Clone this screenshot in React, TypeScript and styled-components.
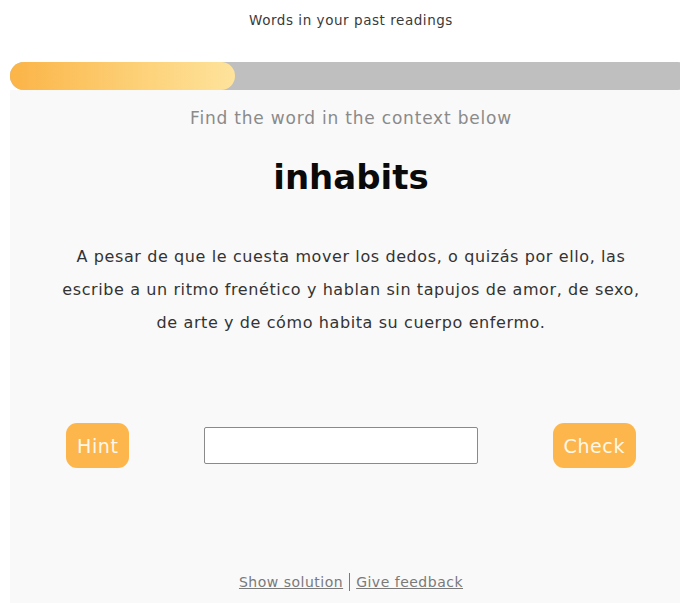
import React, {useState} from 'react';
import styled, {createGlobalStyle} from "styled-components";

const GlobalStyle = createGlobalStyle`
  html, body {
    margin: 0;
    padding: 0;
    background: #ffffff;
    overflow: hidden;
  }
  body {
    font-family: "DejaVu Sans", "Noto Sans", sans-serif;
  }
`

// the exercise card is a little wider than the window; its right edge is cut off
const Page = styled.div`
  width: 702px;
  height: 603px;
  display: flex;
  flex-direction: column;
`

const Title = styled.div`
  height: 62px;
  padding-top: 12px;
  box-sizing: border-box;
  text-align: center;
  font-size: 13.5px;
  letter-spacing: 0.55px;
  color: #3a3a3a;
`

const Track = styled.div`
  margin: 0 10px;
  height: 28px;
  background: #bfbfbf;
  border-radius: 14px;
  display: flex;
`

const Fill = styled.div<{ $progress: number }>`
  width: ${p => p.$progress}px;
  height: 100%;
  border-radius: 14px;
  background: linear-gradient(90deg, #fbb447 0%, #fdd27a 60%, #fee39c 100%);
`

const Panel = styled.div`
  flex: 1;
  margin: 0 10px;
  background: #f9f9f9;
  display: flex;
  flex-direction: column;
  align-items: center;
  padding-top: 17px;
`

const Prompt = styled.div`
  font-size: 17px;
  letter-spacing: 0.8px;
  color: #8a8a8a;
  line-height: 22px;
`

const Word = styled.h1`
  margin: 26px 0 0;
  font-size: 34px;
  font-weight: 700;
  color: #0a0a0a;
  line-height: 44px;
`

const Context = styled.p`
  margin: 41px 0 0;
  width: 592px;
  text-align: center;
  font-size: 16px;
  letter-spacing: 0.6px;
  line-height: 33px;
  color: #333333;
`

const Controls = styled.div`
  margin-top: 84px;
  width: 100%;
  display: flex;
  align-items: center;
  justify-content: space-between;
  padding: 0 56px;
  box-sizing: border-box;
`

const ActionButton = styled.button`
  height: 45px;
  padding: 0 11px;
  border: none;
  border-radius: 11px;
  background: #fdb64c;
  color: #fff8ea;
  font-family: inherit;
  font-size: 19px;
  letter-spacing: 0.6px;
  cursor: pointer;
`

const Answer = styled.input`
  width: 274px;
  height: 37px;
  box-sizing: border-box;
  border: 1px solid #8a8a8a;
  border-radius: 2px;
  background: #ffffff;
  font-family: inherit;
  font-size: 16px;
  padding: 0 8px;
  outline: none;
`

const Footer = styled.div`
  margin-top: auto;
  margin-bottom: 12px;
  font-size: 14px;
  letter-spacing: 0.5px;
  color: #7a7a7a;
  display: flex;
  gap: 6px;
  align-items: center;
`

const FooterLink = styled.a`
  color: #7a7a7a;
  text-decoration: underline;
  cursor: pointer;
`

const Divider = styled.span`
  width: 1px;
  height: 18px;
  background: #7a7a7a;
`

export default function App() {
    const [answer, setAnswer] = useState('')
    return (
        <Page>
            <GlobalStyle/>
            <Title>Words in your past readings</Title>
            <Track>
                <Fill $progress={225}/>
            </Track>
            <Panel>
                <Prompt>Find the word in the context below</Prompt>
                <Word>inhabits</Word>
                <Context>
                    A pesar de que le cuesta mover los dedos, o quizás por ello, las escribe a un ritmo
                    frenético y hablan sin tapujos de amor, de sexo, de arte y de cómo habita su cuerpo enfermo.
                </Context>
                <Controls>
                    <ActionButton>Hint</ActionButton>
                    <Answer value={answer} onChange={e => setAnswer(e.target.value)}/>
                    <ActionButton>Check</ActionButton>
                </Controls>
                <Footer>
                    <FooterLink>Show solution</FooterLink>
                    <Divider/>
                    <FooterLink>Give feedback</FooterLink>
                </Footer>
            </Panel>
        </Page>
    );
}
